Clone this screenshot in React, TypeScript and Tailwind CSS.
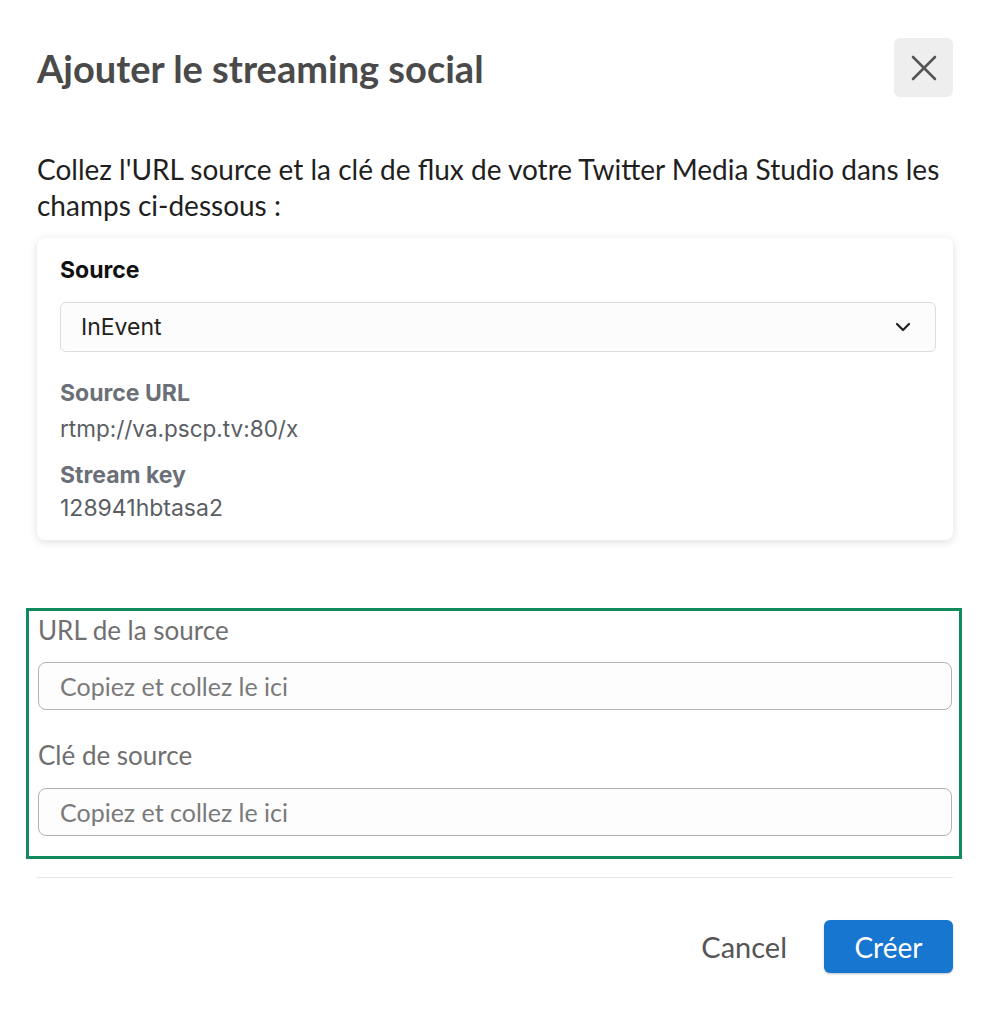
export default function App() {
  const lato = { fontFamily: 'Lato, "Open Sans", sans-serif' }

  return (
    <div className="min-h-screen bg-white">
      <div className="pl-[37px] pr-[40px] pt-[38px] pb-[37px] font-['Lato',sans-serif]">
        {/* header */}
        <div className="flex items-center justify-between">
          <h1 className="text-[38px] leading-[40px] font-bold text-[#4a4a4a]">
            Ajouter le streaming social
          </h1>
          <button className="w-[59px] h-[59px] rounded-md bg-[#eeeeee] flex items-center justify-center">
            <svg width="28" height="28" viewBox="0 0 28 28" fill="none" stroke="#555" strokeWidth="2.6" strokeLinecap="round">
              <line x1="3" y1="3" x2="25" y2="25" />
              <line x1="25" y1="3" x2="3" y2="25" />
            </svg>
          </button>
        </div>

        <p className="mt-[54px] text-[28px] leading-[36px] text-[#1f1f1f]">
          Collez l'URL source et la clé de flux de votre Twitter Media Studio dans les champs ci-dessous :
        </p>

        {/* source card */}
        <div className="mt-[15px] rounded-lg bg-white shadow-[0_2px_10px_rgba(0,0,0,0.13)] pl-[23px] pr-[17px] pt-[18px] pb-[18px] font-['Inter',sans-serif]">
          <div className="text-[23px] leading-[28px] font-bold text-[#111]">Source</div>
          <div className="mt-[18px] h-[50px] rounded-md border border-[#dcdcdc] bg-[#fcfcfc] flex items-center justify-between pl-[20px] pr-[24px]">
            <span className="text-[23px] text-[#222]">InEvent</span>
            <svg width="16" height="10" viewBox="0 0 16 10" fill="none" stroke="#222" strokeWidth="2.2" strokeLinecap="round" strokeLinejoin="round">
              <polyline points="2,2 8,8 14,2" />
            </svg>
          </div>
          <div className="mt-[27px] text-[23px] leading-[28px] font-bold text-[#6b7078]">Source URL</div>
          <div className="mt-[8px] text-[22.5px] leading-[28px] text-[#5a5e63]">rtmp://va.pscp.tv:80/x</div>
          <div className="mt-[18px] text-[23px] leading-[28px] font-bold text-[#6b7078]">Stream key</div>
          <div className="mt-[5px] text-[23px] leading-[28px] text-[#5a5e63]">128941hbtasa2</div>
        </div>

        {/* pasted fields */}
        <div className="mt-[68px] ml-[-11px] mr-[-9px] border-[3px] border-[#138a5e] pl-[9px] pr-[7px] pt-[4px] pb-[20px]" style={lato}>
          <label className="block text-[26px] leading-[30px] text-[#707070]">URL de la source</label>
          <input
            className="mt-[17px] block w-full h-[48px] rounded-lg border-[1.5px] border-[#b3b3b3] bg-[#fdfdfd] px-[21px] text-[25px] text-[#333] placeholder:text-[#7a7a7a] outline-none"
            placeholder="Copiez et collez le ici"
          />
          <label className="mt-[30px] block text-[26px] leading-[30px] text-[#707070]">Clé de source</label>
          <input
            className="mt-[18px] block w-full h-[48px] rounded-lg border-[1.5px] border-[#b3b3b3] bg-[#fdfdfd] px-[21px] text-[25px] text-[#333] placeholder:text-[#7a7a7a] outline-none"
            placeholder="Copiez et collez le ici"
          />
        </div>

        <div className="mt-[18px] h-px bg-[#e6e6e6]" />

        {/* footer */}
        <div className="mt-[42px] flex items-center justify-end gap-[37px]">
          <button className="text-[29px] text-[#555]">Cancel</button>
          <button className="w-[129px] h-[53px] rounded-md bg-[#1776cf] text-[28px] text-white shadow-[0_1px_2px_rgba(0,0,0,0.25)]">
            Créer
          </button>
        </div>
      </div>
    </div>
  )
}
